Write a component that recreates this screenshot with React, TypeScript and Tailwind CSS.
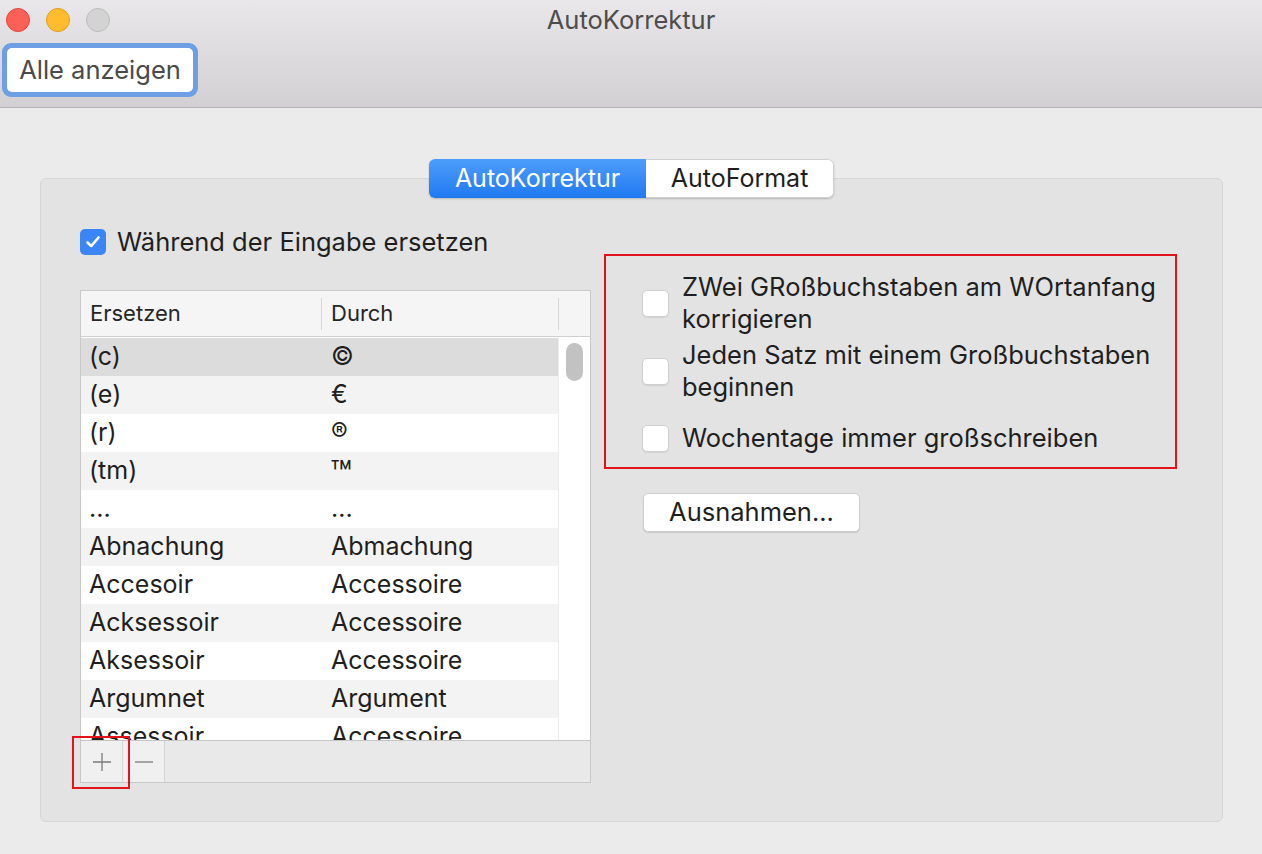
import React from 'react';

const rows: [string, string][] = [
  ['(c)', '©'],
  ['(e)', '€'],
  ['(r)', '®'],
  ['(tm)', '™'],
  ['...', '...'],
  ['Abnachung', 'Abmachung'],
  ['Accesoir', 'Accessoire'],
  ['Acksessoir', 'Accessoire'],
  ['Aksessoir', 'Accessoire'],
  ['Argumnet', 'Argument'],
  ['Assessoir', 'Accessoire'],
];

const Box: React.FC<{ checked?: boolean }> = ({ checked }) =>
  checked ? (
    <div className="w-[26px] h-[26px] rounded-[5px] bg-[#3a86f6] flex items-center justify-center shrink-0">
      <svg width="18" height="18" viewBox="0 0 18 18" fill="none">
        <path d="M3.5 9.5 L7.2 13.2 L14.5 4.5" stroke="white" strokeWidth="2.6" strokeLinecap="round" strokeLinejoin="round" />
      </svg>
    </div>
  ) : (
    <div className="w-[27px] h-[27px] rounded-[5px] bg-white border border-[#cfcfcf] shadow-[0_1px_1px_rgba(0,0,0,0.08)] shrink-0" />
  );

const App: React.FC = () => {
  return (
    <div className="w-[1262px] h-[854px] flex flex-col bg-[#ecebec] text-[#222] overflow-hidden" style={{ fontFamily: 'Inter, "Noto Sans", sans-serif' }}>
      {/* Title bar + toolbar */}
      <div className="h-[108px] shrink-0 bg-gradient-to-b from-[#e9e7e9] to-[#d2d0d2] border-b border-[#b3b1b3] flex flex-col">
        <div className="relative h-[40px] flex items-center pl-[6px] gap-[16px]">
          <div className="w-[24px] h-[24px] rounded-full bg-[#fe5f57] border border-[#e2463f]" />
          <div className="w-[24px] h-[24px] rounded-full bg-[#febc2e] border border-[#e1a116]" />
          <div className="w-[24px] h-[24px] rounded-full bg-[#d3d3d3] border border-[#bdbdbd]" />
          <div className="absolute inset-0 flex items-center justify-center text-[25.5px] text-[#4d4d4d] pointer-events-none">AutoKorrektur</div>
        </div>
        <div className="pl-[2px] pt-[3px]">
          <div className="inline-flex rounded-[9px] bg-[#6e9ee3] p-[5px]">
            <div className="w-[186px] h-[44px] rounded-[5px] bg-white flex items-center justify-center text-[25.5px] text-[#4a4a4a]">Alle anzeigen</div>
          </div>
        </div>
      </div>

      {/* Content */}
      <div className="flex-1 pt-[70px] px-[40px]">
        <div className="w-[1183px] h-[644px] rounded-[6px] bg-[#e3e3e3] border border-[#d6d6d6] flex flex-col">
          <div className="flex justify-center -mt-[20px]">
            <div className="flex h-[39px] rounded-[6px] shadow-[0_1px_2px_rgba(0,0,0,0.2)] overflow-hidden text-[25px]">
              <div className="w-[217px] bg-gradient-to-b from-[#4d9dfb] to-[#1f79f2] text-white flex items-center justify-center">AutoKorrektur</div>
              <div className="w-[188px] bg-white text-[#1e1e1e] flex items-center justify-center border border-l-0 border-[#d0d0d0] rounded-r-[6px]">AutoFormat</div>
            </div>
          </div>

          <div className="flex items-start pl-[39px]">
            {/* left column */}
            <div className="flex flex-col mt-[31px]">
              <div className="flex items-center gap-[11px] h-[26px]">
                <Box checked />
                <span className="text-[25.5px] text-[#1f1f1f]">Während der Eingabe ersetzen</span>
              </div>

              <div className="mt-[35px] w-[511px] h-[493px] border border-[#c9c9c9] bg-white flex flex-col">
                <div className="h-[46px] shrink-0 bg-[#f5f5f5] border-b border-[#cfcfcf] flex items-center text-[22px] text-[#262626]">
                  <div className="w-[241px] h-[32px] flex items-center pl-[9px] border-r border-[#d8d8d8]">Ersetzen</div>
                  <div className="w-[237px] h-[32px] flex items-center pl-[9px] border-r border-[#d8d8d8]">Durch</div>
                </div>
                <div className="flex-1 flex overflow-hidden">
                  <div className="flex-1 overflow-hidden pt-[1px]">
                    {rows.map(([a, b], i) => (
                      <div
                        key={i}
                        className={
                          'h-[38px] flex items-center text-[25px] text-[#1f1f1f] ' +
                          (i === 0 ? 'bg-[#dcdcdc]' : i % 2 === 1 ? 'bg-[#f4f3f4]' : 'bg-white')
                        }
                      >
                        <div className="w-[241px] pl-[8px]">{a}</div>
                        {b === '™' ? (
                          <div className="pl-[8px] text-[36px] leading-none mt-[4px]">™</div>
                        ) : (
                          <div className="pl-[9px]">{b}</div>
                        )}
                      </div>
                    ))}
                  </div>
                  <div className="w-[32px] shrink-0 bg-white border-l border-[#ededed] pt-[6px] flex justify-center">
                    <div className="w-[17px] h-[38px] rounded-full bg-[#c2c2c2]" />
                  </div>
                </div>
                <div className="relative h-[42px] shrink-0 bg-[#e9e9e9] border-t border-[#c6c6c6] flex">
                  <div className="w-[42px] h-full bg-[#f0f0f0] border-r border-[#d4d4d4] flex items-center justify-center">
                    <svg width="22" height="22" viewBox="0 0 22 22">
                      <path d="M11 2 V20 M2 11 H20" stroke="#7a7a7a" strokeWidth="1.3" />
                    </svg>
                  </div>
                  <div className="w-[42px] h-full bg-[#f0f0f0] border-r border-[#d4d4d4] flex items-center justify-center">
                    <svg width="22" height="22" viewBox="0 0 22 22">
                      <path d="M2 11 H20" stroke="#7a7a7a" strokeWidth="1.3" />
                    </svg>
                  </div>
                  <div className="absolute -left-[9px] -top-[5px] w-[58px] h-[53px] border-2 border-[#e3131b]" />
                </div>
              </div>
            </div>

            {/* right column */}
            <div className="ml-[13px] mt-[56px] flex flex-col">
              <div className="w-[573px] h-[215px] border-2 border-[#e3131b] pl-[36px] pt-[15px] flex flex-col text-[25.5px] text-[#1f1f1f] leading-[32px]">
                <div className="flex items-center gap-[13px]">
                  <Box />
                  <div>ZWei GRoßbuchstaben am WOrtanfang<br />korrigieren</div>
                </div>
                <div className="flex items-center gap-[13px] mt-[4px]">
                  <Box />
                  <div>Jeden Satz mit einem Großbuchstaben<br />beginnen</div>
                </div>
                <div className="flex items-center gap-[13px] mt-[19px]">
                  <Box />
                  <div>Wochentage immer großschreiben</div>
                </div>
              </div>
              <div className="ml-[39px] mt-[24px] w-[217px] h-[39px] rounded-[5px] bg-white border border-[#cdcdcd] shadow-[0_1px_1px_rgba(0,0,0,0.12)] flex items-center justify-center text-[25.5px] text-[#1f1f1f]">
                Ausnahmen...
              </div>
            </div>
          </div>
        </div>
      </div>
    </div>
  );
};

export default App;
